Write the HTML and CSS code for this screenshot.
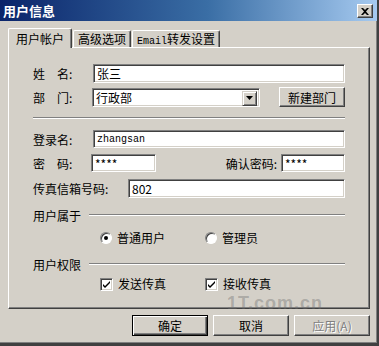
FILE: index.html
```html
<!DOCTYPE html>
<html>
<head>
<meta charset="utf-8">
<link rel="stylesheet" href="styles.css">
</head>
<body>
<div class="window">
  <div class="titlebar">
    <span class="title">用户信息</span>
    <span class="close"><svg width="8" height="7" viewBox="0 0 8 7"><path d="M0 0h2l2 2 2-2h2L5 3.5 8 7H6L4 5 2 7H0l3-3.5z" fill="#000"/></svg></span>
  </div>
  <div class="tabs">
    <div class="tab active">用户帐户</div>
    <div class="tab">高级选项</div>
    <div class="tab"><span class="lat">Email</span>转发设置</div>
  </div>
  <div class="panel">
    <div class="row r1">
      <span class="label w60"><span class="sp">姓</span>名:</span>
      <div class="field grow">张三</div>
    </div>
    <div class="row r2">
      <span class="label w60"><span class="sp">部</span>门:</span>
      <div class="field select">行政部<span class="arrow"><svg width="7" height="4" viewBox="0 0 7 4"><path d="M0 0h7L3.5 4z" fill="#000"/></svg></span></div>
      <div class="btn newdept">新建部门</div>
    </div>
    <div class="sep"></div>
    <div class="row r3">
      <span class="label w60">登录名:</span>
      <div class="field grow"><span class="lat">zhangsan</span></div>
    </div>
    <div class="row r4">
      <span class="label w59"><span class="sp">密</span>码:</span>
      <div class="field pw">****</div>
      <span class="label confirm">确认密码:</span>
      <div class="field pw2">****</div>
    </div>
    <div class="row r5">
      <span class="label w95">传真信箱号码:</span>
      <div class="field grow">802</div>
    </div>
    <div class="group g1">
      <span class="label">用户属于</span>
      <span class="gline"></span>
    </div>
    <div class="opts o1">
      <span class="opt"><span class="radio on"></span>普通用户</span>
      <span class="opt"><span class="radio"></span>管理员</span>
    </div>
    <div class="group g2">
      <span class="label">用户权限</span>
      <span class="gline"></span>
    </div>
    <div class="opts o2">
      <span class="opt"><span class="check"><svg width="9" height="9" viewBox="0 0 9 9"><path d="M1 4l2 2 5-5v2L3 8 1 6z" fill="#000"/></svg></span>发送传真</span>
      <span class="opt"><span class="check"><svg width="9" height="9" viewBox="0 0 9 9"><path d="M1 4l2 2 5-5v2L3 8 1 6z" fill="#000"/></svg></span>接收传真</span>
    </div>
  </div>
  <div class="buttons">
    <div class="btn default">确定</div>
    <div class="btn">取消</div>
    <div class="btn disabled">应用(A)</div>
  </div>
  <div class="watermark">1T.com.cn</div>
</div>
</body>
</html>
```
FILE: styles.css
```css
* { box-sizing: border-box; }
body {
  margin: 0;
  background: #d4d0c8;
  font-family: "Noto Sans CJK SC", "Liberation Sans", sans-serif;
  font-size: 12px;
  color: #000;
}
.window {
  position: relative;
  width: 379px;
  height: 346px;
  background: #d4d0c8;
  border-right: 2px solid #404040;
  border-bottom: 3px solid #404040;
  box-shadow: inset -1px -1px #808080;
  overflow: hidden;
}
.titlebar {
  height: 21px;
  background: linear-gradient(to right, #0a246a, #3a6ea5 55%, #a6caf0);
  display: flex;
  align-items: center;
  justify-content: space-between;
  padding: 0 4px 0 3px;
}
.title {
  color: #fff;
  font-weight: bold;
  font-size: 13px;
  line-height: 21px;
}
.close {
  width: 16px;
  height: 14px;
  background: #d4d0c8;
  border: 1px solid;
  border-color: #fff #404040 #404040 #fff;
  box-shadow: inset -1px -1px #808080;
  display: flex;
  align-items: center;
  justify-content: center;
  margin-top: 1px;
}
.lat { font-family: "Liberation Mono", monospace; font-size: 10px; }
.tabs {
  display: flex;
  align-items: flex-end;
  padding-left: 8px;
  margin-top: 7px;
  height: 19px;
  position: relative;
  z-index: 1;
}
.tab {
  height: 17px;
  padding: 0 4px;
  line-height: 16px;
  border: 1px solid #fff;
  border-bottom: none;
  border-right: 1px solid #404040;
  box-shadow: inset -1px 0 #808080;
  border-radius: 2px 2px 0 0;
  margin-right: 1px;
  white-space: nowrap;
}
.tab.active {
  height: 20px;
  padding: 0 7px;
  margin-bottom: -1px;
  background: #d4d0c8;
  line-height: 20px;
}
.panel {
  width: 362px;
  height: 262px;
  margin-left: 8px;
  border: 1px solid;
  border-color: #fff #404040 #404040 #fff;
  box-shadow: inset -1px -1px #808080;
  padding: 16px 24px 0 24px;
  display: flex;
  flex-direction: column;
}
.row { display: flex; align-items: center; }
.label { white-space: nowrap; }
.sp { margin-right: 12px; }
.w60 { width: 60px; }
.w59 { width: 59px; }
.w95 { width: 95px; }
.field {
  background: #fff;
  border: 1px solid;
  border-color: #808080 #fff #fff #808080;
  box-shadow: inset 1px 1px #404040, inset -1px -1px #d4d0c8;
  padding: 0 3px;
  display: flex;
  align-items: center;
  white-space: nowrap;
}
.grow { flex: 1; }
.r1 { height: 19px; }
.r1 .field { height: 19px; }
.r2 { height: 20px; margin-top: 4px; }
.select { width: 168px; height: 19px; position: relative; margin-left: -1px; }
.arrow {
  position: absolute;
  right: 2px;
  top: 2px;
  width: 15px;
  height: 15px;
  background: #d4d0c8;
  border: 1px solid;
  border-color: #d4d0c8 #404040 #404040 #d4d0c8;
  box-shadow: inset 1px 1px #fff, inset -1px -1px #808080;
  display: flex;
  align-items: center;
  justify-content: center;
}
.btn {
  height: 21px;
  background: #d4d0c8;
  border: 1px solid;
  border-color: #fff #404040 #404040 #fff;
  box-shadow: inset -1px -1px #808080;
  display: flex;
  align-items: center;
  justify-content: center;
  white-space: nowrap;
}
.newdept { width: 66px; margin-left: auto; height: 20px; }
.sep {
  margin-top: 10px;
  height: 2px;
  border-top: 1px solid #808080;
  border-bottom: 1px solid #fff;
}
.r3 { height: 18px; margin-top: 11px; }
.r3 .field { height: 18px; }
.r4 { height: 18px; margin-top: 6px; }
.pw { width: 65px; height: 18px; margin-left: -1px; }
.confirm { margin-left: auto; margin-right: 4px; }
.pw2 { width: 64px; height: 18px; }
.r5 { height: 19px; margin-top: 7px; }
.r5 .field { height: 19px; }
.group { display: flex; align-items: center; height: 16px; }
.g1 { margin-top: 9px; }
.g2 { margin-top: 10px; }
.gline {
  flex: 1;
  margin-left: 8px;
  height: 2px;
  border-top: 1px solid #808080;
  border-bottom: 1px solid #fff;
}
.opts { display: flex; height: 16px; padding-left: 67px; line-height: 12px; }
.o1 { margin-top: 7px; }
.o2 { margin-top: 4px; }
.opt { display: flex; align-items: center; width: 105px; }
.radio {
  width: 12px;
  height: 12px;
  border-radius: 50%;
  background: #fff;
  border: 1px solid;
  border-color: #808080 #fff #fff #808080;
  box-shadow: inset 1px 1px #404040;
  margin-right: 5px;
  position: relative;
}
.radio.on::after {
  content: "";
  position: absolute;
  left: 3px;
  top: 3px;
  width: 4px;
  height: 4px;
  border-radius: 50%;
  background: #000;
}
.check {
  width: 13px;
  height: 13px;
  background: #fff;
  border: 1px solid;
  border-color: #808080 #fff #fff #808080;
  box-shadow: inset 1px 1px #404040, inset -1px -1px #d4d0c8;
  margin-right: 5px;
  display: flex;
  align-items: center;
  justify-content: center;
}
.buttons {
  display: flex;
  justify-content: flex-end;
  gap: 5px;
  margin-top: 6px;
  padding-right: 7px;
}
.buttons .btn { width: 76px; }
.btn.default {
  border: 1px solid #000;
  box-shadow: inset 1px 1px #fff, inset -1px -1px #404040, inset -2px -2px #808080;
}
.btn.disabled { color: #808080; text-shadow: 1px 1px #fff; }
.watermark {
  position: absolute;
  left: 227px;
  top: 296px;
  line-height: 14px;
  font-family: "Liberation Sans", sans-serif;
  font-weight: bold;
  font-size: 18px;
  letter-spacing: 1px;
  color: rgba(110, 110, 110, 0.4);
  pointer-events: none;
}
```
